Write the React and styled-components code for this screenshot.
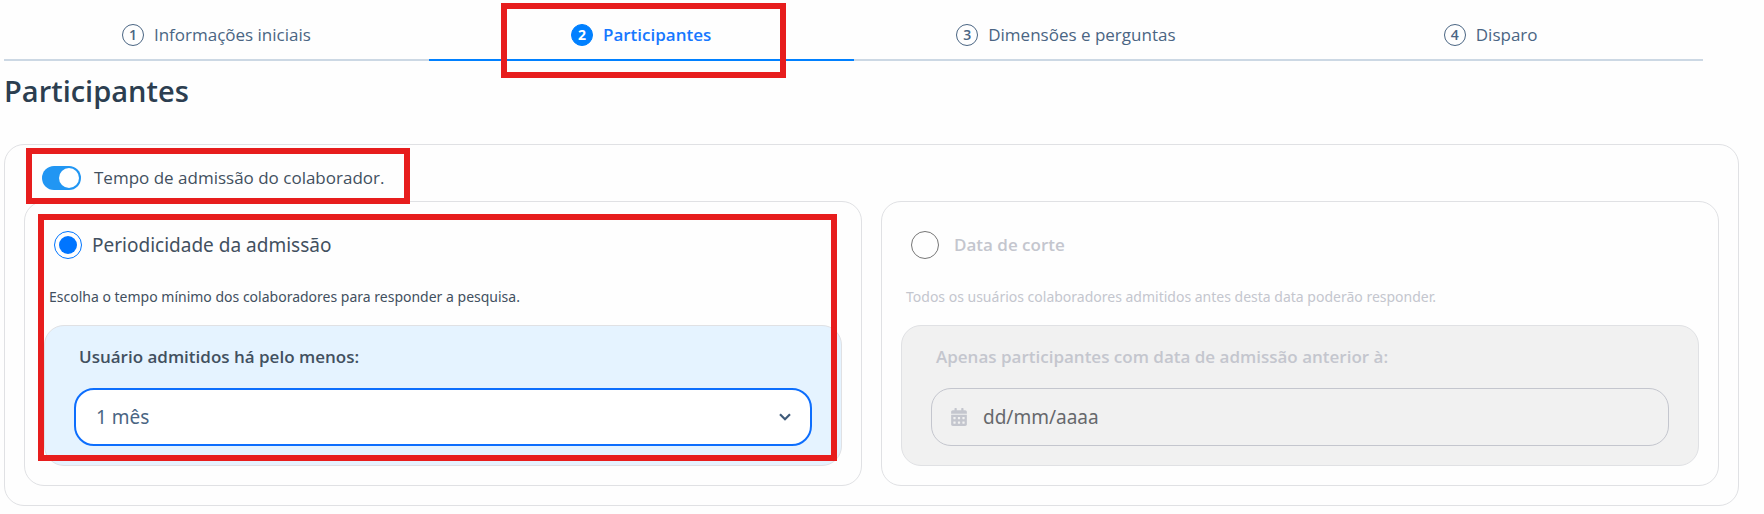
import React, { useState } from "react";
import styled, { createGlobalStyle, css } from "styled-components";
import { FaCalendarAlt } from "react-icons/fa";

const colors = {
  slate: "#4a6583",
  ink: "#2c3e50",
  text: "#42505f",
  blue: "#0080ff",
  link: "#1677ff",
  line: "#ccd8e4",
  border: "#e0e1e4",
  muted: "#c4c6ce",
  mark: "#e71d1d",
};

const fonts = {
  base: `"Open Sans", "Noto Sans", sans-serif`,
  reading: `"Noto Sans", "Open Sans", sans-serif`,
};

const GlobalStyle = createGlobalStyle`
  *, *::before, *::after { box-sizing: border-box; }
  body {
    margin: 0;
    background: #fefefe;
    color: ${colors.text};
    font-family: ${fonts.base};
  }
  input, select, button { font-family: inherit; }
`;

const Page = styled.main`
  padding: 0 25px 8px 4px;
`;

const Steps = styled.nav`
  display: flex;
  margin-right: 36px;
`;

const Step = styled.button`
  position: relative;
  flex: 1;
  display: flex;
  align-items: center;
  justify-content: center;
  gap: 10px;
  height: 61px;
  padding: 10px 0 0;
  border: 0;
  border-bottom: 2px solid ${(p) => (p.$active ? colors.blue : colors.line)};
  background: none;
  color: ${(p) => (p.$active ? colors.link : colors.slate)};
  font-size: 17px;
  font-weight: ${(p) => (p.$active ? 600 : 400)};
  line-height: 24px;
`;

const StepNumber = styled.span`
  display: flex;
  align-items: center;
  justify-content: center;
  width: 22px;
  height: 22px;
  border: 1px solid ${(p) => (p.$active ? colors.blue : colors.slate)};
  border-radius: 50%;
  background: ${(p) => (p.$active ? colors.blue : "transparent")};
  color: ${(p) => (p.$active ? "#fff" : colors.slate)};
  font-size: 14px;
  font-weight: ${(p) => (p.$active ? 700 : 600)};
  line-height: 20px;
`;

const Highlight = styled.span`
  position: absolute;
  inset: ${(p) => p.$inset};
  z-index: 1;
  border: 6px solid ${colors.mark};
  pointer-events: none;
`;

const Title = styled.h1`
  margin: 10px 0 33px;
  color: ${colors.ink};
  font-size: 29px;
  font-weight: 600;
  line-height: 40px;
`;

const Card = styled.section`
  padding: 19px;
  border: 1px solid ${colors.border};
  border-radius: 20px;
`;

const SwitchRow = styled.div`
  position: relative;
  display: flex;
  width: fit-content;
  height: 37px;
  padding-left: 18px;
`;

const SwitchLabel = styled.label`
  display: flex;
  align-items: center;
  gap: 13px;
  height: 28px;
  font-size: 17px;
  line-height: 24px;
`;

const Switch = styled.input`
  appearance: none;
  display: flex;
  align-items: center;
  justify-content: ${(p) => (p.checked ? "flex-end" : "flex-start")};
  width: 39px;
  height: 24px;
  margin: 0;
  padding: 2px;
  border-radius: 12px;
  background: ${(p) => (p.checked ? "#2196f3" : colors.muted)};

  &::before {
    content: "";
    width: 20px;
    height: 20px;
    border-radius: 50%;
    background: #fff;
  }
`;

const Options = styled.div`
  display: grid;
  grid-template-columns: 1fr 1fr;
  gap: 19px;
`;

const Option = styled.div`
  position: relative;
  padding: 29px 19px 19px;
  border: 1px solid ${colors.border};
  border-radius: 20px;
  color: ${(p) => (p.$off ? colors.muted : colors.text)};
`;

const OptionLabel = styled.label`
  display: flex;
  align-items: center;
  gap: ${(p) => (p.$off ? "15px" : "10px")};
  height: 28px;
  padding-left: 10px;
  font-family: ${(p) => (p.$off ? fonts.base : fonts.reading)};
  font-size: ${(p) => (p.$off ? "17px" : "19px")};
  font-weight: ${(p) => (p.$off ? 600 : 400)};
  line-height: 28px;
`;

const Radio = styled.input`
  appearance: none;
  display: grid;
  place-items: center;
  width: 28px;
  height: 28px;
  margin: 0;
  border: 1px solid ${(p) => (p.checked ? "#0075ff" : "#767676")};
  border-radius: 50%;

  &::before {
    content: "";
    width: 18px;
    height: 18px;
    border-radius: 50%;
    background: ${(p) => (p.checked ? "#0075ff" : "transparent")};
  }
`;

const Description = styled.p`
  margin: 27px 0 17px;
  padding-left: 5px;
  font-family: ${fonts.reading};
  font-size: 14px;
  line-height: 22px;
`;

const Panel = styled.div`
  padding: 19px 29px;
  border: 1px solid ${colors.border};
  border-radius: 20px;
  background: ${(p) => (p.$off ? "#f1f1f1" : "#e5f3ff")};
`;

const FieldLabel = styled.label`
  display: block;
  margin-bottom: 19px;
  padding-left: 5px;
  font-size: 17px;
  font-weight: 600;
  line-height: 24px;
`;

const Field = styled.div`
  display: flex;
  align-items: center;
  height: 58px;
  padding: 0 18px;
  border-radius: 20px;
  ${(p) =>
    p.$off
      ? css`
          border: 1px solid ${colors.muted};
          color: ${colors.muted};
        `
      : css`
          border: 2px solid #0d6efd;
          background: #fff;
          color: ${colors.slate};
        `}
`;

const control = css`
  flex: 1;
  min-width: 0;
  height: 28px;
  padding: 0;
  border: 0;
  outline: 0;
  background: none;
  font-size: 19px;
  line-height: 28px;
`;

const Select = styled.select`
  ${control}
  appearance: none;
  padding-left: 2px;
  font-family: ${fonts.reading};
  color: inherit;
`;

const DateInput = styled.input`
  ${control}
  margin-left: 15px;
  font-family: ${fonts.reading};

  &::placeholder {
    color: #66686c;
    opacity: 1;
  }
`;

const Chevron = () => (
  <svg width="14" height="10" viewBox="0 0 14 10" fill="none" stroke="#3f5b7a" strokeWidth="2.2" aria-hidden="true">
    <path d="M2 2.2 7 7.2 12 2.2" />
  </svg>
);

const steps = ["Informações iniciais", "Participantes", "Dimensões e perguntas", "Disparo"];

export default function App() {
  const [current, setCurrent] = useState(1);
  const [enabled, setEnabled] = useState(true);
  const [mode, setMode] = useState("period");

  return (
    <>
      <GlobalStyle />
      <Page>
        <Steps>
          {steps.map((name, i) => (
            <Step key={name} type="button" $active={i === current} onClick={() => setCurrent(i)}>
              <StepNumber $active={i === current}>{i + 1}</StepNumber>
              {name}
              {i === 1 && <Highlight $inset="3px 68px -19px 72px" />}
            </Step>
          ))}
        </Steps>

        <Title>Participantes</Title>

        <Card>
          <SwitchRow>
            <SwitchLabel>
              <Switch type="checkbox" role="switch" checked={enabled} onChange={() => setEnabled(!enabled)} />
              Tempo de admissão do colaborador.
            </SwitchLabel>
            <Highlight $inset="-16px -26px -3px 2px" />
          </SwitchRow>

          <Options>
            <Option>
              <OptionLabel>
                <Radio type="radio" name="mode" checked={mode === "period"} onChange={() => setMode("period")} />
                Periodicidade da admissão
              </OptionLabel>
              <Description>Escolha o tempo mínimo dos colaboradores para responder a pesquisa.</Description>
              <Panel>
                <FieldLabel htmlFor="period">Usuário admitidos há pelo menos:</FieldLabel>
                <Field>
                  <Select id="period">
                    <option>1 mês</option>
                  </Select>
                  <Chevron />
                </Field>
              </Panel>
              <Highlight $inset="12px 24px 24px 13px" />
            </Option>

            <Option $off>
              <OptionLabel $off>
                <Radio type="radio" name="mode" checked={mode === "date"} onChange={() => setMode("date")} />
                Data de corte
              </OptionLabel>
              <Description>
                Todos os usuários colaboradores admitidos antes desta data poderão responder.
              </Description>
              <Panel $off>
                <FieldLabel htmlFor="cutoff">Apenas participantes com data de admissão anterior à:</FieldLabel>
                <Field $off>
                  <FaCalendarAlt size={18} aria-hidden="true" />
                  <DateInput id="cutoff" type="text" placeholder="dd/mm/aaaa" disabled />
                </Field>
              </Panel>
            </Option>
          </Options>
        </Card>
      </Page>
    </>
  );
}
